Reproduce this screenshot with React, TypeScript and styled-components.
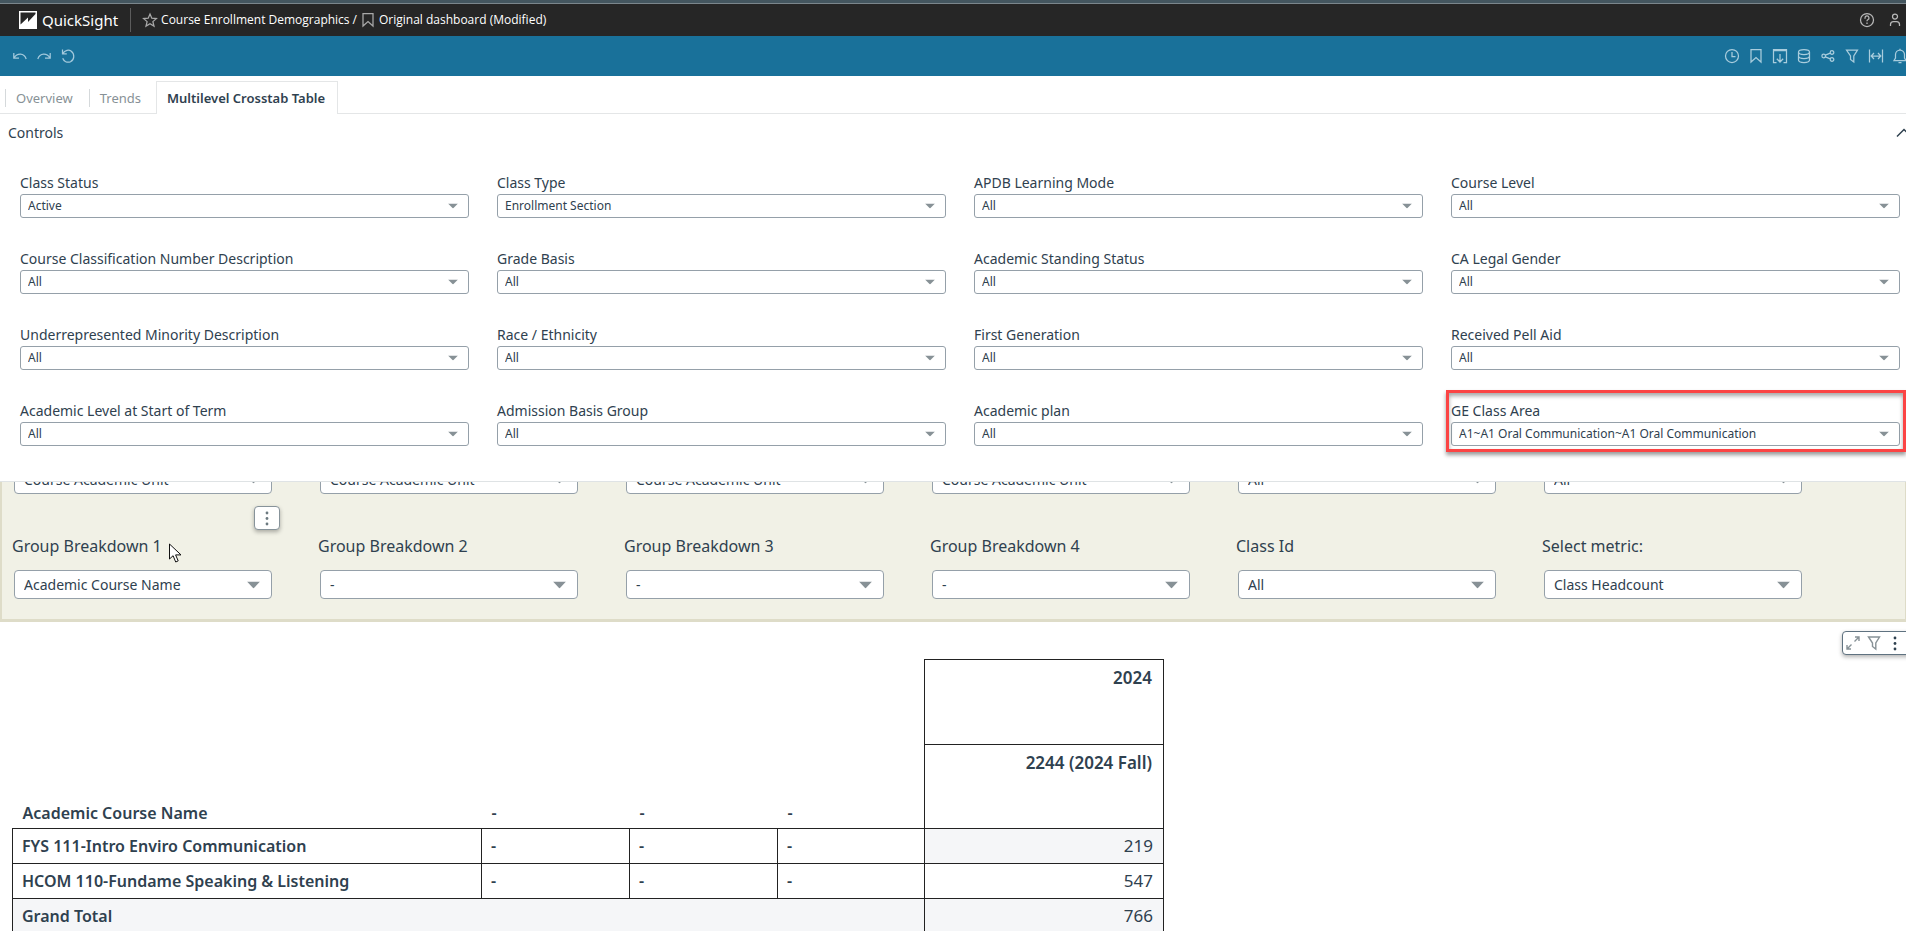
import React, { useState } from "react";
import styled, { createGlobalStyle, css } from "styled-components";

const ink = "#2f414f";
const muted = "#879196";

const GlobalStyle = createGlobalStyle`
  *, *::before, *::after { box-sizing: border-box; }
  html, body { margin: 0; height: 100%; overflow: hidden; }
  body { background: #fff; color: ${ink}; font: 14px/20px "Noto Sans", "Open Sans", sans-serif; }
  button, select { font: inherit; color: inherit; }
`;

const Page = styled.div`
  display: flex;
  flex-direction: column;
  min-height: 100vh;
`;

const BrowserEdge = styled.div`
  height: 4px;
  background: #44565f;
  border-bottom: 1px solid #7b868c;
`;

const TopBar = styled.header`
  display: flex;
  align-items: center;
  height: 32px;
  padding: 0 3px 0 19px;
  background: #262626;
  color: #fff;
`;

const Brand = styled.a`
  display: flex;
  align-items: center;
  gap: 5px;
  padding-right: 12px;
  color: #fff;
  font-size: 15px;
  text-decoration: none;
`;

const Divider = styled.span`
  width: 1px;
  height: 24px;
  margin-right: 11px;
  background: #5c5c5c;
`;

const Crumbs = styled.nav`
  display: flex;
  flex: 1;
  align-items: center;
  gap: 3px;
  font-family: "Open Sans", "Noto Sans", sans-serif;
  font-size: 12px;
  font-weight: 500;
  white-space: nowrap;
`;

const Row = styled.div<{ $gap: number }>`
  display: flex;
  align-items: center;
  gap: ${(p) => p.$gap}px;
`;

const IconButton = styled.button<{ $tone: string }>`
  display: flex;
  flex: none;
  align-items: center;
  justify-content: center;
  width: 16px;
  height: 16px;
  padding: 0;
  border: 0;
  background: none;
  color: ${(p) => p.$tone};
`;

const ActionBar = styled.div`
  display: flex;
  align-items: center;
  justify-content: space-between;
  height: 40px;
  padding-left: 12px;
  margin-right: -2px;
  background: #19719a;
`;

const Tabs = styled.div`
  display: flex;
  align-items: flex-end;
  height: 38px;
  padding-left: 5px;
  border-bottom: 1px solid #e4e6e7;
`;

const Tab = styled.button<{ $active?: boolean }>`
  height: 18px;
  margin-bottom: 6px;
  padding: 0 16px 0 10px;
  border: 0;
  border-left: 1px solid #d5d9db;
  background: #fff;
  color: ${muted};
  font-size: 13px;
  line-height: 18px;
  white-space: nowrap;
  ${(p) =>
    p.$active &&
    css`
      height: 33px;
      margin-bottom: -1px;
      margin-left: -1px;
      padding: 0 12px 0 10px;
      border: 1px solid #e4e6e7;
      border-bottom: 0;
      color: ${ink};
      font-weight: 600;
    `}
`;

const ControlsPanel = styled.section`
  border-bottom: 1px solid #dfe3e5;
`;

const ControlsHead = styled.div`
  display: flex;
  align-items: center;
  justify-content: space-between;
  height: 38px;
  padding-left: 8px;
  margin-right: -6px;
`;

const ControlsTitle = styled.h2`
  margin: 0;
  font-size: 14px;
  font-weight: 400;
`;

const ControlGrid = styled.div`
  display: grid;
  grid-template-columns: repeat(4, 1fr);
  gap: 32px 28px;
  padding: 22px 6px 35px 20px;
`;

const Control = styled.div`
  position: relative;
  display: flex;
  flex-direction: column;
`;

const ControlLabel = styled.label`
  height: 20px;
  font-size: 14px;
  line-height: 18px;
`;

const SelectBox = styled.div<{ $large?: boolean }>`
  position: relative;
  height: ${(p) => (p.$large ? 29 : 24)}px;

  svg {
    position: absolute;
    top: 50%;
    right: ${(p) => (p.$large ? 12 : 11)}px;
    transform: translateY(-50%);
    pointer-events: none;
  }
`;

const NativeSelect = styled.select<{ $large?: boolean }>`
  width: 100%;
  height: 100%;
  padding: 0 32px 0 ${(p) => (p.$large ? 9 : 7)}px;
  appearance: none;
  border: 1px solid #95a0a9;
  border-radius: ${(p) => (p.$large ? 4 : 3)}px;
  background: #fff;
  font-size: ${(p) => (p.$large ? 14 : 12)}px;
`;

const Highlight = styled.span`
  position: absolute;
  inset: -12px -6px -6px -5px;
  border: 3px solid #fb4444;
  box-shadow: 0 3px 4px rgba(0, 0, 0, 0.4), inset 0 3px 4px rgba(0, 0, 0, 0.35);
  pointer-events: none;
`;

const Parameters = styled.section`
  overflow: hidden;
  padding: 0 103px 20px 12px;
  border: solid #dedcc8;
  border-width: 0 1px 3px 2px;
  background: #f1f1e6;
`;

const ParameterGrid = styled.div<{ $scrolled?: boolean }>`
  display: grid;
  grid-template-columns: repeat(6, 1fr);
  gap: 48px;
  margin-top: ${(p) => (p.$scrolled ? -17 : 40)}px;
`;

const ParameterLabel = styled.label`
  height: 36px;
  margin-left: -2px;
  font-size: 16px;
  line-height: 24px;
  white-space: nowrap;
`;

const MenuButton = styled.button`
  position: absolute;
  top: -28px;
  right: -8px;
  display: flex;
  align-items: center;
  justify-content: center;
  width: 26px;
  height: 24px;
  padding: 0;
  border: 1px solid #87939a;
  border-radius: 4px;
  background: #fff;
  box-shadow: 0 2px 4px rgba(0, 0, 0, 0.3);
  color: #6c7a80;
`;

const Pointer = styled.svg`
  position: absolute;
  top: 9px;
  left: 155px;
`;

const Visual = styled.section`
  position: relative;
  padding: 37px 12px 0;
`;

const VisualTools = styled.div`
  position: absolute;
  top: 9px;
  right: -6px;
  display: flex;
  align-items: center;
  gap: 5px;
  width: 70px;
  height: 24px;
  padding-left: 2px;
  border: 1px solid #5f7280;
  border-radius: 4px;
  background: #fff;
  box-shadow: 0 2px 4px rgba(0, 0, 0, 0.3);
`;

const Crosstab = styled.table`
  width: 1152px;
  table-layout: fixed;
  border-collapse: collapse;
  font-size: 16px;
  line-height: 22px;
`;

const CornerCell = styled.td`
  height: 85px;
`;

const FieldHead = styled.th`
  height: 84px;
  padding: 0 10px 4px;
  font-weight: 600;
  text-align: left;
  vertical-align: bottom;
`;

const ColumnHead = styled.th`
  padding: 7px 11px 0;
  border: 1px solid #222;
  font-size: 17px;
  font-weight: 600;
  text-align: right;
  vertical-align: top;
`;

const RowHead = styled.th<{ $shade?: boolean }>`
  height: 35px;
  padding: 0 9px;
  border: 1px solid #222;
  background: ${(p) => (p.$shade ? "#f5f6f8" : "#fff")};
  font-weight: 600;
  text-align: left;
`;

const ValueCell = styled.td<{ $shade?: boolean }>`
  padding: 0 10px;
  border: 1px solid #222;
  background: ${(p) => (p.$shade ? "#f5f6f8" : "#fff")};
  font-size: 17px;
  text-align: right;
`;

type IconProps = { d: string; size?: number; width?: number };

const Icon = ({ d, size = 16, width = 1.25 }: IconProps) => (
  <svg
    width={size}
    height={size}
    viewBox="0 0 16 16"
    fill="none"
    stroke="currentColor"
    strokeWidth={width}
    aria-hidden="true"
  >
    <path d={d} />
  </svg>
);

const paths = {
  star: "M8 2l1.800 4.200 4.600.4-3.500 3 1.100 4.500L8 11.700l-4 2.400 1.100-4.500-3.500-3 4.600-.4z",
  bookmark: "M3 1.500h10v12.500l-5-4.500-5 4.500z",
  undo: "M1.800 5v5h5.200M2.200 9.700C5 5 12 4.500 14.200 11",
  redo: "M14.200 5v5H9M13.800 9.700C11 5 4 4.500 1.800 11",
  reset: "M2.500 1.500v4.300h4.300M2.700 5.600C5 1.800 9 1.500 11 3c4 3 3.500 9-.6 10.800C7 15 3.800 13.500 2.700 10.300",
  clock: "M14.500 8A6.500 6.500 0 1 1 1.500 8a6.500 6.500 0 0 1 13 0zM8 4v4.500h3.500",
  download: "M4.500 14.500h-3v-13h13v13h-3M1.500 2.500h13M8 6v8M4.800 10.800L8 14l3.200-3.200",
  database:
    "M13.500 4c0 1.400-2.500 2.500-5.500 2.500S2.500 5.400 2.500 4 5 1.500 8 1.500 13.500 2.600 13.500 4zM2.500 4v8c0 1.400 2.500 2.500 5.500 2.500s5.500-1.100 5.500-2.500V4M2.500 8c0 1.400 2.500 2.500 5.500 2.500s5.500-1.100 5.500-2.500",
  share:
    "M5.500 8a1.800 1.800 0 1 1-3.600 0 1.800 1.800 0 0 1 3.600 0zM13.800 4.500a1.800 1.800 0 1 1-3.600 0 1.800 1.800 0 0 1 3.600 0zM13.800 11.500a1.800 1.800 0 1 1-3.600 0 1.800 1.800 0 0 1 3.600 0zM5.300 7.200l5-2M5.300 8.800l5 2",
  filter: "M2.500 2h11L9.800 8v6L6.500 11.500V8z",
  fit: "M1.500 1.500v13M14.500 1.500v13M3.500 8h9M6 5L3.200 8 6 11M10 5l2.800 3L10 11",
  bell: "M2 12.500h12L12.500 10V6.500a4.500 4.500 0 0 0-9 0V10zM8 .8V2M6.500 14.500h3",
  help: "M14.500 8A6.500 6.500 0 1 1 1.500 8a6.500 6.500 0 0 1 13 0zM6 6.800V6a2 2 0 1 1 2.800 1.800c-.6.3-.8.6-.8 1.400M8 10.500V12",
  user: "M10.500 4.500a2.500 2.500 0 1 1-5 0 2.500 2.500 0 0 1 5 0zM3.500 14v-1.500c0-2 1.200-3 3-3h3c1.800 0 3 1 3 3V14",
  expand: "M9.500 6.500L14 2M10 2h4v4M6.500 9.500L2 14M2 10v4h4",
  chevron: "M1 11.500l7-7 7 7",
};

const Dots = ({ color }: { color: string }) => (
  <svg width="4" height="15" viewBox="0 0 4 15" fill={color} aria-hidden="true">
    <circle cx="2" cy="2" r="1.400" />
    <circle cx="2" cy="7.500" r="1.400" />
    <circle cx="2" cy="13" r="1.400" />
  </svg>
);

type SelectProps = { id?: string; label?: string; value: string; large?: boolean };

const Select = ({ id, label, value, large }: SelectProps) => (
  <SelectBox $large={large}>
    <NativeSelect id={id} aria-label={label} defaultValue={value} $large={large}>
      <option>{value}</option>
    </NativeSelect>
    <svg width={large ? 13 : 10} height={large ? 7 : 5} viewBox="0 0 12 6" preserveAspectRatio="none" fill={muted} aria-hidden="true">
      <path d="M0 0h12L6 6z" />
    </svg>
  </SelectBox>
);

const controls: [string, string][] = [
  ["Class Status", "Active"],
  ["Class Type", "Enrollment Section"],
  ["APDB Learning Mode", "All"],
  ["Course Level", "All"],
  ["Course Classification Number Description", "All"],
  ["Grade Basis", "All"],
  ["Academic Standing Status", "All"],
  ["CA Legal Gender", "All"],
  ["Underrepresented Minority Description", "All"],
  ["Race / Ethnicity", "All"],
  ["First Generation", "All"],
  ["Received Pell Aid", "All"],
  ["Academic Level at Start of Term", "All"],
  ["Admission Basis Group", "All"],
  ["Academic plan", "All"],
  ["GE Class Area", "A1~A1 Oral Communication~A1 Oral Communication"],
];

const scrolledValues = [
  "Course Academic Unit",
  "Course Academic Unit",
  "Course Academic Unit",
  "Course Academic Unit",
  "All",
  "All",
];

const parameters: [string, string][] = [
  ["Group Breakdown 1", "Academic Course Name"],
  ["Group Breakdown 2", "-"],
  ["Group Breakdown 3", "-"],
  ["Group Breakdown 4", "-"],
  ["Class Id", "All"],
  ["Select metric:", "Class Headcount"],
];

const actions: [string, string][] = [
  ["Schedules", paths.clock],
  ["Bookmarks", paths.bookmark],
  ["Export", paths.download],
  ["Data", paths.database],
  ["Share", paths.share],
  ["Filter", paths.filter],
  ["Fit to width", paths.fit],
  ["Alerts", paths.bell],
];

const history: [string, string][] = [
  ["Undo", paths.undo],
  ["Redo", paths.redo],
  ["Reset", paths.reset],
];

const tabs = ["Overview", "Trends", "Multilevel Crosstab Table"];

export default function App() {
  const [active, setActive] = useState(tabs[2]);
  return (
    <Page>
      <GlobalStyle />
      <BrowserEdge />
      <TopBar>
        <Brand href="#home">
          <svg width="18" height="18" viewBox="0 0 18 18" aria-hidden="true">
            <path fill="#fff" d="M0 0h18v18H0z" />
            <path fill="#262626" d="M1.500 1.500H16.500V3L9 11V6.500L1.500 13.500z" />
          </svg>
          QuickSight
        </Brand>
        <Divider />
        <Crumbs aria-label="Breadcrumb">
          <IconButton $tone="#a9a9a9" aria-label="Favorite">
            <Icon d={paths.star} />
          </IconButton>
          <span>Course Enrollment Demographics</span>
          <span>/</span>
          <IconButton $tone="#a9a9a9" aria-label="Bookmark">
            <Icon d={paths.bookmark} />
          </IconButton>
          <span>Original dashboard (Modified)</span>
        </Crumbs>
        <Row $gap={12}>
          <IconButton $tone="#b9b9b9" aria-label="Help">
            <Icon d={paths.help} />
          </IconButton>
          <IconButton $tone="#b9b9b9" aria-label="Account">
            <Icon d={paths.user} />
          </IconButton>
        </Row>
      </TopBar>
      <ActionBar>
        <Row $gap={8}>
          {history.map(([name, d]) => (
            <IconButton key={name} $tone="#a3c9dc" aria-label={name}>
              <Icon d={d} />
            </IconButton>
          ))}
        </Row>
        <Row $gap={8}>
          {actions.map(([name, d]) => (
            <IconButton key={name} $tone="#a9cddd" aria-label={name}>
              <Icon d={d} />
            </IconButton>
          ))}
        </Row>
      </ActionBar>
      <Tabs role="tablist">
        {tabs.map((tab) => (
          <Tab key={tab} role="tab" aria-selected={tab === active} $active={tab === active} onClick={() => setActive(tab)}>
            {tab}
          </Tab>
        ))}
      </Tabs>
      <ControlsPanel>
        <ControlsHead>
          <ControlsTitle>Controls</ControlsTitle>
          <IconButton $tone={ink} aria-label="Collapse controls">
            <Icon d={paths.chevron} width={1.5} />
          </IconButton>
        </ControlsHead>
        <ControlGrid>
          {controls.map(([label, value], i) => (
            <Control key={label}>
              <ControlLabel htmlFor={`control-${i}`}>{label}</ControlLabel>
              <Select id={`control-${i}`} value={value} />
              {label === "GE Class Area" && <Highlight />}
            </Control>
          ))}
        </ControlGrid>
      </ControlsPanel>
      <Parameters>
        <ParameterGrid $scrolled>
          {scrolledValues.map((value, i) => (
            <Select key={i} label={`Filter ${i + 1}`} value={value} large />
          ))}
        </ParameterGrid>
        <ParameterGrid>
          {parameters.map(([label, value], i) => (
            <Control key={label}>
              <ParameterLabel htmlFor={`parameter-${i}`}>{label}</ParameterLabel>
              <Select id={`parameter-${i}`} value={value} large />
              {i === 0 && (
                <>
                  <MenuButton aria-label="Control menu">
                    <Dots color="#6c7a80" />
                  </MenuButton>
                  <Pointer width="13" height="20" viewBox="0 0 13 20" aria-hidden="true">
                    <path d="M.5 1v15l3.600-3.300L6.700 19l2.500-1.100-2.600-6H12z" fill="#fff" stroke="#111" />
                  </Pointer>
                </>
              )}
            </Control>
          ))}
        </ParameterGrid>
      </Parameters>
      <Visual>
        <VisualTools>
          <IconButton $tone={muted} aria-label="Maximize">
            <Icon d={paths.expand} width={1.4} />
          </IconButton>
          <IconButton $tone={muted} aria-label="Filter visual">
            <Icon d={paths.filter} width={1.4} />
          </IconButton>
          <IconButton $tone={ink} aria-label="Visual menu">
            <Dots color={ink} />
          </IconButton>
        </VisualTools>
        <Crosstab>
          <colgroup>
            <col width="469" />
            <col width="148" />
            <col width="148" />
            <col width="147" />
            <col width="239" />
          </colgroup>
          <thead>
            <tr>
              <CornerCell colSpan={4} />
              <ColumnHead scope="col">2024</ColumnHead>
            </tr>
            <tr>
              <FieldHead scope="col">Academic Course Name</FieldHead>
              <FieldHead scope="col">-</FieldHead>
              <FieldHead scope="col">-</FieldHead>
              <FieldHead scope="col">-</FieldHead>
              <ColumnHead scope="col">2244 (2024 Fall)</ColumnHead>
            </tr>
          </thead>
          <tbody>
            <tr>
              <RowHead scope="row">FYS 111-Intro Enviro Communication</RowHead>
              <RowHead>-</RowHead>
              <RowHead>-</RowHead>
              <RowHead>-</RowHead>
              <ValueCell $shade>219</ValueCell>
            </tr>
            <tr>
              <RowHead scope="row">HCOM 110-Fundame Speaking &amp; Listening</RowHead>
              <RowHead>-</RowHead>
              <RowHead>-</RowHead>
              <RowHead>-</RowHead>
              <ValueCell>547</ValueCell>
            </tr>
            <tr>
              <RowHead scope="row" colSpan={4} $shade>Grand Total</RowHead>
              <ValueCell $shade>766</ValueCell>
            </tr>
          </tbody>
        </Crosstab>
      </Visual>
    </Page>
  );
}
